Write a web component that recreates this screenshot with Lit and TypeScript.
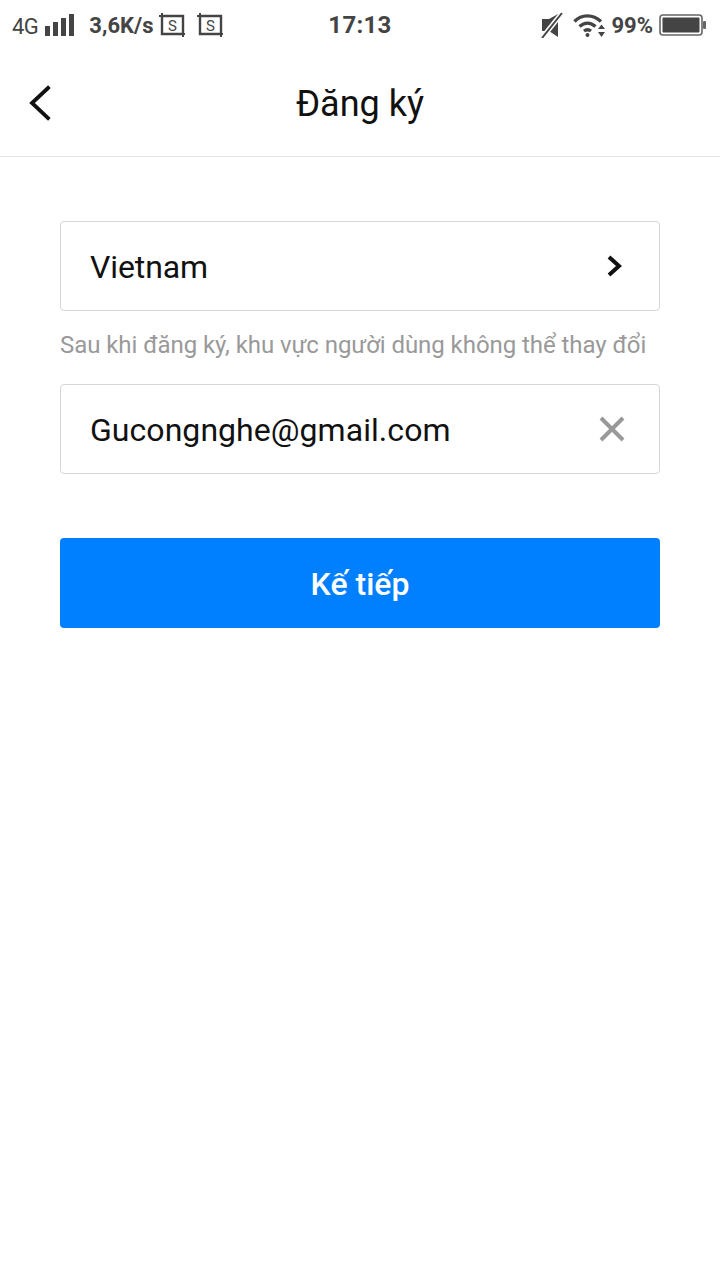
import { LitElement, html, css } from "lit";
import { customElement } from "lit/decorators.js";

@customElement("app-root")
export class AppRoot extends LitElement {
  static styles = css`
    :host { display: block; width: 720px; height: 1280px; background: #fff; font-family: Roboto, "Noto Sans", sans-serif; color: #111; overflow: hidden; }
    .status { height: 52px; box-sizing: border-box; padding: 0 13px 2px 12px; display: grid; grid-template-columns: 1fr auto 1fr; align-items: center; color: #444; }
    .sl, .sr { display: flex; align-items: center; }
    .sr { justify-content: flex-end; }
    .net { font-size: 22px; letter-spacing: -0.5px; margin: 2px 7px 0 0; }
    .speed { font-size: 22px; font-weight: 700; margin: 0 6px 0 15px; }
    .time { font-size: 24px; font-weight: 700; letter-spacing: 0.3px; margin-left: 1px; }
    .pct { font-size: 22px; font-weight: 700; margin: 0 6px 0 6px; }
    .gap-left { width: 12px; }
    .gap-right { width: 10px; }
    svg { display: block; flex: none; }
    .nav { height: 105px; box-sizing: border-box; border-bottom: 1px solid #e3e3e3; display: flex; align-items: center; justify-content: center; position: relative; }
    .back { position: absolute; left: 28px; top: 33px; }
    .title { font-size: 36px; color: #111; }
    .form { padding: 64px 60px 0; display: flex; flex-direction: column; }
    .field { height: 90px; box-sizing: border-box; border: 1px solid #d6d6d6; border-radius: 4px; display: flex; align-items: center; justify-content: space-between; padding: 2px 34px 0 29px; font-size: 32px; letter-spacing: -0.1px; color: #111; }
    .field svg { margin-top: -2px; }
    .field.email { padding-right: 33px; letter-spacing: 0.05px; }
    .hint { font-size: 24px; letter-spacing: -0.06px; color: #999; margin: 16px 0 21px; line-height: 36px; white-space: nowrap; }
    .btn { margin-top: 64px; height: 90px; box-sizing: border-box; padding-top: 2px; border-radius: 4px; background: #0080ff; color: #fff; font-size: 32px; font-weight: 500; display: flex; align-items: center; justify-content: center; }
  `;

  private sim() {
    return html`<svg width="26" height="24" viewBox="0 0 26 24" fill="none" stroke="#444">
      <path d="M3 3H24V21H3Z" stroke-width="2.4"/>
      <path d="M0 3H4M3 0V3M23 21H26M24 21V24" stroke-width="2"/>
      <text x="13.5" y="18" font-size="15" font-family="Roboto" fill="#444" stroke="none" text-anchor="middle">S</text>
    </svg>`;
  }

  render() {
    return html`
      <div class="status">
        <div class="sl">
          <span class="net">4G</span>
          <svg width="29" height="24" viewBox="0 0 29 24" fill="#444"><rect x="0" y="13" width="5" height="10"/><rect x="8" y="9" width="5" height="14"/><rect x="16" y="5" width="5" height="18"/><rect x="24" y="1" width="5" height="22"/></svg>
          <span class="speed">3,6K/s</span>
          ${this.sim()}
          <span class="gap-left"></span>
          ${this.sim()}
        </div>
        <div class="time">17:13</div>
        <div class="sr">
          <svg width="22" height="26" viewBox="0 0 22 26" fill="#444"><path d="M1 7H8L17 2V25L8 19H1Z"/><path d="M1 26L21 1" stroke="#fff" stroke-width="5"/><path d="M1 26L21 1" stroke="#444" stroke-width="2"/></svg>
          <span class="gap-right"></span>
          <svg width="32" height="26" viewBox="0 0 32 26" fill="none" stroke="#444" stroke-width="3.4"><path d="M1.5 9.5C8.5 2 20 2 28 9.5"/><path d="M6.5 14.5C11.5 10 17.5 10 22.5 14.5"/><path d="M11 19C13 17.5 16 17.5 18 19"/><circle cx="14.5" cy="23" r="2" fill="#444" stroke="none"/><path d="M25 17L28.5 12.5L32 17ZM25 20L28.5 25L32 20Z" fill="#444" stroke="none"/></svg>
          <span class="pct">99%</span>
          <svg width="48" height="22" viewBox="0 0 48 22" fill="none"><rect x="1" y="1" width="42" height="20" rx="3" stroke="#666" stroke-width="1.6"/><rect x="3.5" y="3.5" width="37" height="15" rx="1" fill="#444"/><rect x="44" y="7" width="3" height="8" rx="1" fill="#666"/></svg>
        </div>
      </div>
      <div class="nav">
        <svg class="back" width="24" height="36" viewBox="0 0 24 36" fill="none" stroke="#111" stroke-width="3.8" stroke-linecap="square"><path d="M20 3L4 18L20 33"/></svg>
        <div class="title">Đăng ký</div>
      </div>
      <div class="form">
        <div class="field"><span>Vietnam</span>
          <svg width="20" height="24" viewBox="0 0 20 24" fill="none" stroke="#111" stroke-width="4"><path d="M4 3L14 12L4 21"/></svg>
        </div>
        <div class="hint">Sau khi đăng ký, khu vực người dùng không thể thay đổi</div>
        <div class="field email"><span>Gucongnghe@gmail.com</span>
          <svg width="28" height="28" viewBox="0 0 28 28" fill="none" stroke="#999" stroke-width="4"><path d="M3 3L25 25M25 3L3 25"/></svg>
        </div>
        <div class="btn">Kế tiếp</div>
      </div>
    `;
  }
}
